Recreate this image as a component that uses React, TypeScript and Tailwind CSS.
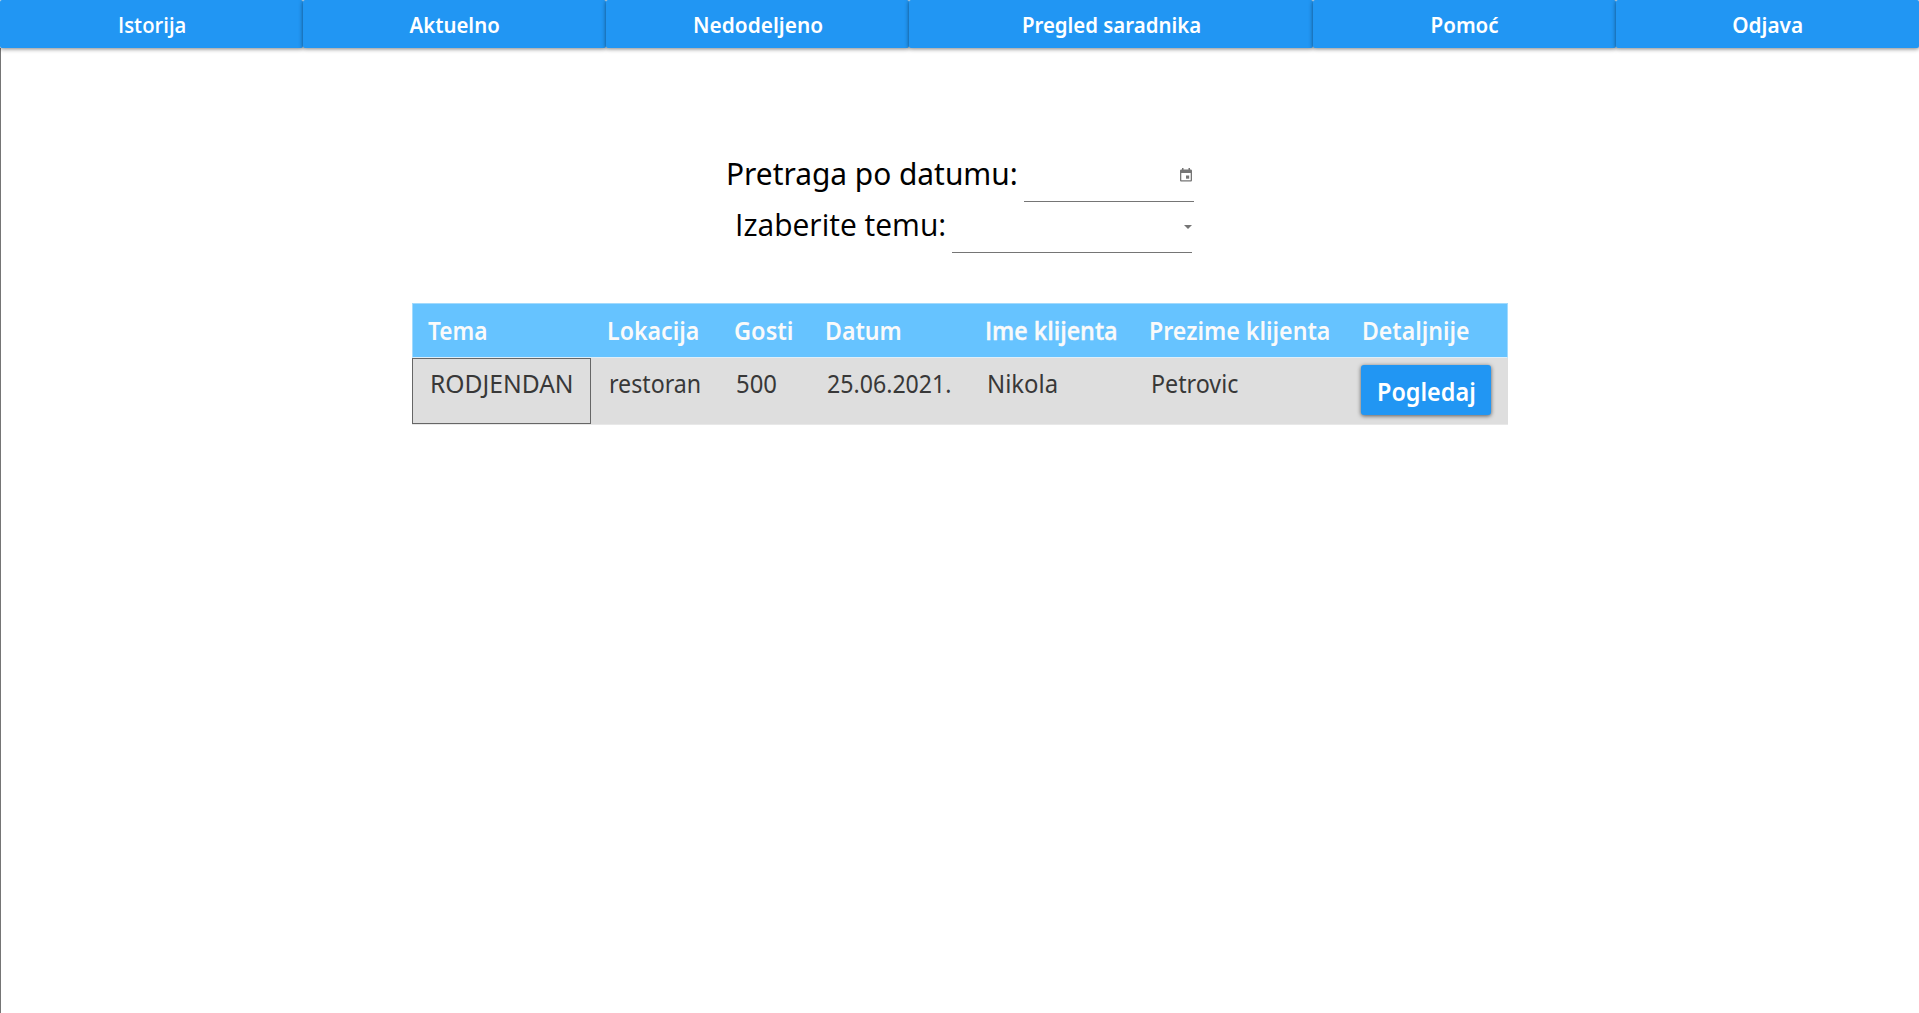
import React from 'react';

const navItems = [
  { label: 'Istorija', width: 'w-[303px]', text: "font-['Open_Sans'] scale-x-[0.943]" },
  { label: 'Aktuelno', width: 'w-[303px]', text: '-ml-px scale-x-[0.948]' },
  { label: 'Nedodeljeno', width: 'w-[303px]', text: 'scale-x-[0.969]' },
  { label: 'Pregled saradnika', width: 'w-[404px]', text: 'scale-x-[0.948]' },
  { label: 'Pomoć', width: 'w-[303px]', text: '-ml-px scale-x-[0.956]' },
  { label: 'Odjava', width: 'w-[303px]', text: '-ml-px scale-x-[0.966]' },
];

const headers = [
  { label: 'Tema', text: '-ml-px scale-x-[0.905]' },
  { label: 'Lokacija', text: '-ml-px scale-x-[0.925]' },
  { label: 'Gosti', text: 'scale-x-[0.942]' },
  { label: 'Datum', text: 'scale-x-[0.925]' },
  { label: 'Ime klijenta', text: "-ml-px font-['Open_Sans'] scale-x-[0.932] [-webkit-text-stroke:0.4px_#fafafa]" },
  { label: 'Prezime klijenta', text: 'scale-x-[0.927]' },
  { label: 'Detaljnije', text: 'ml-px scale-x-[0.922]' },
];

const cells = [
  { label: 'RODJENDAN', text: 'scale-x-[0.985]' },
  { label: 'restoran', text: 'scale-x-[0.928]' },
  { label: '500', text: 'ml-px scale-x-[0.955]' },
  { label: '25.06.2021.', text: 'ml-px scale-x-[0.926]' },
  { label: 'Nikola', text: 'scale-x-[0.955]' },
  { label: 'Petrovic', text: 'ml-px scale-x-[0.931]' },
];

const columns = 'grid grid-cols-[179px_126px_91px_161px_163px_212px_1fr]';

function CalendarIcon() {
  return (
    <svg viewBox="0 0 12 14" className="h-[14px] w-3" fill="#757575">
      <path d="M2 0h1.5v1.500h5V0H10v1.500h.7c.7 0 1.300.6 1.300 1.300v9.400c0 .7-.6 1.300-1.300 1.300H1.300C.6 13.500 0 12.900 0 12.200V2.800c0-.7.6-1.300 1.300-1.300H2V0zM1.300 5v7.200h9.400V5H1.300z" fillRule="evenodd" />
      <path d="M6 7.500h3.200v3.200H6z" />
    </svg>
  );
}

function NavBar() {
  return (
    <nav className="relative z-10 flex h-12 text-[21.5px] font-semibold leading-[49px] text-white">
      {navItems.map((item) => (
        <button
          key={item.label}
          className={`${item.width} h-12 shrink-0 rounded-[2px] bg-[#2196f3] pl-[2px] text-center shadow-[0_1px_4px_rgba(0,0,0,0.5)]`}
        >
          <span className={`inline-block whitespace-nowrap ${item.text}`}>{item.label}</span>
        </button>
      ))}
    </nav>
  );
}

function Filters() {
  return (
    <form className="mx-auto w-[468px] text-[31.5px] leading-[44px] text-black">
      <div className="flex h-[51px]">
        <label className="w-[298px] shrink-0 whitespace-nowrap">
          <span className="inline-block origin-left scale-x-[0.948]">Pretraga po datumu:</span>
        </label>
        <div className="flex w-[170px] shrink-0 justify-end border-b border-[#757575] pr-0.5 pt-[17px]">
          <CalendarIcon />
        </div>
      </div>
      <div className="ml-[9px] flex h-[51px]">
        <label className="w-[217px] shrink-0 whitespace-nowrap">
          <span className="inline-block origin-left scale-x-[0.953] font-['Open_Sans']">Izaberite temu:</span>
        </label>
        <div className="flex w-[240px] shrink-0 justify-end border-b border-[#757575] pt-[23px]">
          <svg viewBox="0 0 8 4" className="h-1 w-2" fill="#757575">
            <path d="M0 0h8L4 4z" />
          </svg>
        </div>
      </div>
    </form>
  );
}

function EventsTable() {
  return (
    <section className="mx-auto mt-[50px] w-[1096px] text-[25px]">
      <div className={`${columns} h-[55px] border border-[#a2dafd] border-b-[#dfeef8] bg-[#66c3ff] font-semibold leading-[53px] text-[#fafafa]`}>
        {headers.map((h) => (
          <div key={h.label} className="pl-4">
            <span className={`inline-block origin-left whitespace-nowrap ${h.text}`}>{h.label}</span>
          </div>
        ))}
      </div>
      <div className={`${columns} h-[67px] border-b border-[#e8e8e8] bg-[#dedede] leading-[49px] text-[#383838]`}>
        {cells.map((c) => (
          <div key={c.label} className="h-[66px] border border-transparent pl-[17px] first:border-[#666666]">
            <span className={`-mt-px inline-block origin-left whitespace-nowrap ${c.text}`}>{c.label}</span>
          </div>
        ))}
        <div className="pl-[17px] pt-[7px]">
          <button className="block h-[50px] w-[130px] rounded-[3px] bg-[#2196f3] pl-4 text-left font-semibold leading-[52px] text-white shadow-[0_1px_4px_rgba(0,0,0,0.6)]">
            <span className="inline-block origin-left scale-x-[0.936]">Pogledaj</span>
          </button>
        </div>
      </div>
    </section>
  );
}

export default function App() {
  return (
    <div className="flex h-screen flex-col overflow-hidden bg-white font-['Noto_Sans',sans-serif]">
      <NavBar />
      <main className="flex-1 border-l border-[#757575] pt-[103px]">
        <Filters />
        <EventsTable />
      </main>
    </div>
  );
}
